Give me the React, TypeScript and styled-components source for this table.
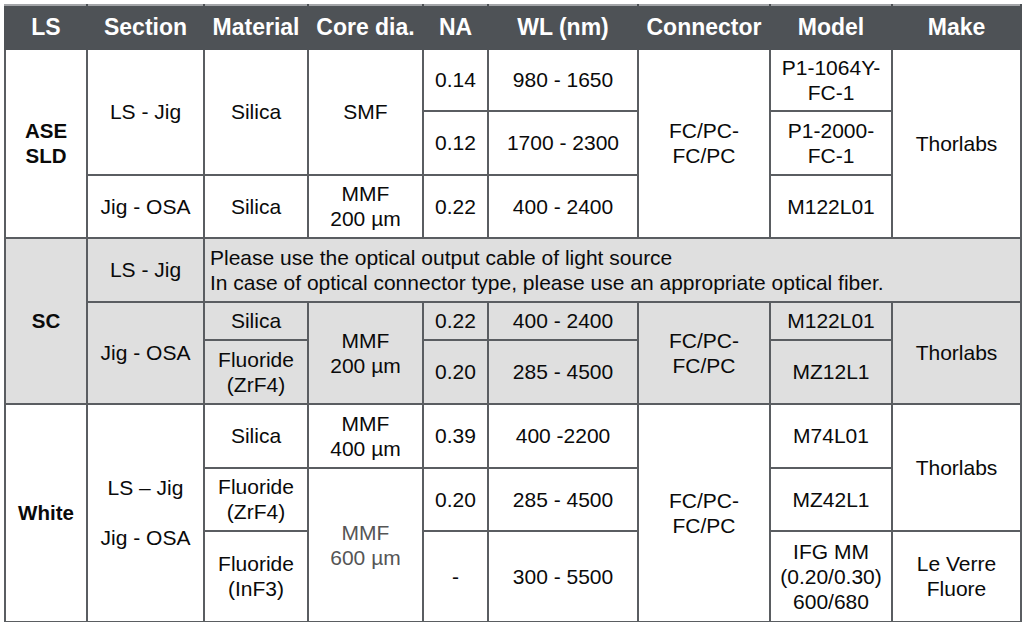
import React from "react";
import styled, { createGlobalStyle } from "styled-components";

const Global = createGlobalStyle`
  html, body { margin: 0; padding: 0; background: #ffffff; }
  body { font-family: "Liberation Sans", Arial, sans-serif; }
`;

const Page = styled.div`
  padding: 4px 0 0 4px;
`;

const Table = styled.table`
  border-collapse: collapse;
  table-layout: fixed;
  width: 1016px;
  font-family: "Liberation Sans", Arial, sans-serif;
  color: #0a0a0a;
`;

const Row = styled.tr<{ $h: number; $shade?: boolean }>`
  height: ${(p) => p.$h}px;
  background: ${(p) => (p.$shade ? "#dfdfdf" : "#ffffff")};
`;

const HeadRow = styled.tr`
  height: 44px;
  background: #4e5256;
`;

const HeadCell = styled.th`
  border: 2px solid #4e5256;
  border-top-color: #a3a5a8;
  color: #ffffff;
  font-weight: 700;
  font-size: 23px;
  text-align: center;
  padding: 0;
  white-space: nowrap;
`;

const Cell = styled.td<{ $left?: boolean; $bold?: boolean; $muted?: boolean }>`
  border: 2px solid #5a5d61;
  padding: ${(p) => (p.$left ? "0 0 1px 5px" : "0 0 1px 0")};
  text-align: ${(p) => (p.$left ? "left" : "center")};
  vertical-align: middle;
  font-size: ${(p) => (p.$bold ? "20.5px" : "21px")};
  font-weight: ${(p) => (p.$bold ? 700 : 400)};
  line-height: 25px;
  color: ${(p) => (p.$muted ? "#555555" : "#0a0a0a")};
  white-space: nowrap;
`;

const Spacer = styled.span`
  display: block;
  height: 25px;
`;

const cols = [82, 117, 104, 115, 65, 150, 132, 122, 129];

export default function App() {
  return (
    <Page>
      <Global />
      <Table>
        <colgroup>
          {cols.map((w, i) => (
            <col key={i} style={{ width: w }} />
          ))}
        </colgroup>
        <thead>
          <HeadRow>
            <HeadCell>LS</HeadCell>
            <HeadCell>Section</HeadCell>
            <HeadCell>Material</HeadCell>
            <HeadCell>Core dia.</HeadCell>
            <HeadCell>NA</HeadCell>
            <HeadCell>WL (nm)</HeadCell>
            <HeadCell>Connector</HeadCell>
            <HeadCell>Model</HeadCell>
            <HeadCell>Make</HeadCell>
          </HeadRow>
        </thead>
        <tbody>
          <Row $h={62}>
            <Cell rowSpan={3} $bold>
              ASE
              <br />
              SLD
            </Cell>
            <Cell rowSpan={2}>LS - Jig</Cell>
            <Cell rowSpan={2}>Silica</Cell>
            <Cell rowSpan={2}>SMF</Cell>
            <Cell>0.14</Cell>
            <Cell>980 - 1650</Cell>
            <Cell rowSpan={3}>
              FC/PC-
              <br />
              FC/PC
            </Cell>
            <Cell>
              P1-1064Y-
              <br />
              FC-1
            </Cell>
            <Cell rowSpan={3}>Thorlabs</Cell>
          </Row>
          <Row $h={64}>
            <Cell>0.12</Cell>
            <Cell>1700 - 2300</Cell>
            <Cell>
              P1-2000-
              <br />
              FC-1
            </Cell>
          </Row>
          <Row $h={63}>
            <Cell>Jig - OSA</Cell>
            <Cell>Silica</Cell>
            <Cell>
              MMF
              <br />
              200 µm
            </Cell>
            <Cell>0.22</Cell>
            <Cell>400 - 2400</Cell>
            <Cell>M122L01</Cell>
          </Row>

          <Row $h={64} $shade>
            <Cell rowSpan={3} $bold>
              SC
            </Cell>
            <Cell>LS - Jig</Cell>
            <Cell colSpan={7} $left>
              Please use the optical output cable of light source
              <br />
              In case of optical connector type, please use an appropriate optical fiber.
            </Cell>
          </Row>
          <Row $h={38} $shade>
            <Cell rowSpan={2}>Jig - OSA</Cell>
            <Cell>Silica</Cell>
            <Cell rowSpan={2}>
              MMF
              <br />
              200 µm
            </Cell>
            <Cell>0.22</Cell>
            <Cell>400 - 2400</Cell>
            <Cell rowSpan={2}>
              FC/PC-
              <br />
              FC/PC
            </Cell>
            <Cell>M122L01</Cell>
            <Cell rowSpan={2}>Thorlabs</Cell>
          </Row>
          <Row $h={64} $shade>
            <Cell>
              Fluoride
              <br />
              (ZrF4)
            </Cell>
            <Cell>0.20</Cell>
            <Cell>285 - 4500</Cell>
            <Cell>MZ12L1</Cell>
          </Row>

          <Row $h={64}>
            <Cell rowSpan={3} $bold>
              White
            </Cell>
            <Cell rowSpan={3}>
              LS – Jig
              <Spacer />
              Jig - OSA
            </Cell>
            <Cell>Silica</Cell>
            <Cell>
              MMF
              <br />
              400 µm
            </Cell>
            <Cell>0.39</Cell>
            <Cell>400 -2200</Cell>
            <Cell rowSpan={3}>
              FC/PC-
              <br />
              FC/PC
            </Cell>
            <Cell>M74L01</Cell>
            <Cell rowSpan={2}>Thorlabs</Cell>
          </Row>
          <Row $h={63}>
            <Cell>
              Fluoride
              <br />
              (ZrF4)
            </Cell>
            <Cell rowSpan={2} $muted>
              MMF
              <br />
              600 µm
            </Cell>
            <Cell>0.20</Cell>
            <Cell>285 - 4500</Cell>
            <Cell>MZ42L1</Cell>
          </Row>
          <Row $h={91}>
            <Cell>
              Fluoride
              <br />
              (InF3)
            </Cell>
            <Cell>-</Cell>
            <Cell>300 - 5500</Cell>
            <Cell>
              IFG MM
              <br />
              (0.20/0.30)
              <br />
              600/680
            </Cell>
            <Cell>
              Le Verre
              <br />
              Fluore
            </Cell>
          </Row>
        </tbody>
      </Table>
    </Page>
  );
}
